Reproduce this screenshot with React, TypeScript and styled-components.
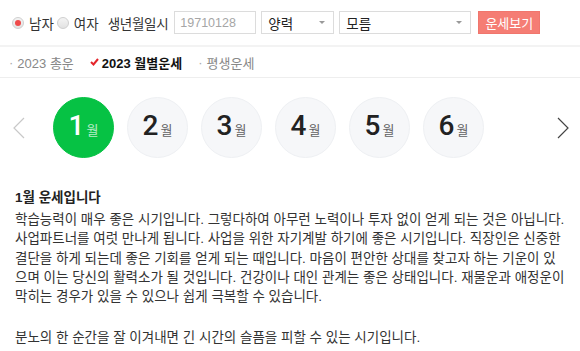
import { useState } from 'react';
import styled, { createGlobalStyle } from 'styled-components';

const GlobalStyle = createGlobalStyle`
  body {
    margin: 0;
    background: #fff;
    font-family: "Liberation Sans", "Noto Sans CJK KR", sans-serif;
    color: #333;
  }
`;

const MONTHS = [1, 2, 3, 4, 5, 6];

const FORTUNE_LINES = [
  '학습능력이 매우 좋은 시기입니다. 그렇다하여 아무런 노력이나 투자 없이 얻게 되는 것은 아닙니다.',
  '사업파트너를 여럿 만나게 됩니다. 사업을 위한 자기계발 하기에 좋은 시기입니다. 직장인은 신중한',
  '결단을 하게 되는데 좋은 기회를 얻게 되는 때입니다. 마음이 편안한 상대를 찾고자 하는 기운이 있',
  '으며 이는 당신의 활력소가 될 것입니다. 건강이나 대인 관계는 좋은 상태입니다. 재물운과 애정운이',
  '막히는 경우가 있을 수 있으나 쉽게 극복할 수 있습니다.',
];

const App = () => {
  const [gender, setGender] = useState<'m' | 'f'>('m');
  const [month, setMonth] = useState(1);

  return (
    <>
      <GlobalStyle />
      <Page>
        <SearchBar>
          <RadioLabel onClick={() => setGender('m')}>
            <Radio checked={gender === 'm'} />
            남자
          </RadioLabel>
          <RadioLabel onClick={() => setGender('f')}>
            <Radio checked={gender === 'f'} />
            여자
          </RadioLabel>
          <FieldLabel>생년월일시</FieldLabel>
          <DateInput placeholder="19710128" />
          <SelectBox width={73}>
            양력
            <Caret />
          </SelectBox>
          <SelectBox width={132}>
            모름
            <Caret />
          </SelectBox>
          <SubmitButton>운세보기</SubmitButton>
        </SearchBar>

        <Tabs>
          <Tab>
            <Dot>·</Dot>2023 총운
          </Tab>
          <Tab active>
            <svg width="9" height="8" viewBox="0 0 9 8">
              <path d="M1 4 L3.5 6.5 L8 1" stroke="#e4252b" strokeWidth="2" fill="none" />
            </svg>
            2023 월별운세
          </Tab>
          <Tab>
            <Dot>·</Dot>평생운세
          </Tab>
        </Tabs>

        <MonthRow>
          <ArrowButton side="left">
            <svg width="12" height="22" viewBox="0 0 12 22">
              <path d="M11 1 L1 11 L11 21" stroke="#c8c8c8" strokeWidth="1.2" fill="none" />
            </svg>
          </ArrowButton>
          <MonthList>
            {MONTHS.map(m => (
              <MonthCircle key={m} active={m === month} onClick={() => setMonth(m)}>
                <MonthNum>{m}</MonthNum>
                <MonthUnit>월</MonthUnit>
              </MonthCircle>
            ))}
          </MonthList>
          <ArrowButton side="right">
            <svg width="12" height="22" viewBox="0 0 12 22">
              <path d="M1 1 L11 11 L1 21" stroke="#444" strokeWidth="1.2" fill="none" />
            </svg>
          </ArrowButton>
        </MonthRow>

        <Article>
          <Title>{month}월 운세입니다</Title>
          <Body>
            {FORTUNE_LINES.map(line => (
              <Line key={line}>{line}</Line>
            ))}
          </Body>
          <Body>
            <Line>분노의 한 순간을 잘 이겨내면 긴 시간의 슬픔을 피할 수 있는 시기입니다.</Line>
          </Body>
        </Article>
      </Page>
    </>
  );
};

export default App;

const Page = styled.div`
  width: 580px;
  overflow: hidden;
`;

const SearchBar = styled.div`
  display: flex;
  align-items: center;
  height: 45px;
  padding-left: 12px;
  border-bottom: 2px solid #f3f3f3;
  font-size: 13.5px;
  color: #333;
`;

const RadioLabel = styled.label`
  display: flex;
  align-items: center;
  gap: 5px;
  margin-right: 3px;
  cursor: pointer;
`;

const Radio = styled.span<{ checked: boolean }>`
  position: relative;
  width: 10px;
  height: 10px;
  border-radius: 50%;
  border: 1px solid #cfcfcf;
  background: linear-gradient(#f4f4f4, #e2e2e2);
  &::after {
    content: '';
    display: ${p => (p.checked ? 'block' : 'none')};
    position: absolute;
    left: 2px;
    top: 2px;
    width: 6px;
    height: 6px;
    border-radius: 50%;
    background: #ef4a4a;
  }
`;

const FieldLabel = styled.span`
  margin-left: 6px;
  margin-right: 6px;
  letter-spacing: -0.3px;
`;

const DateInput = styled.input`
  box-sizing: border-box;
  width: 82px;
  height: 23px;
  border: 1px solid #dcdcdc;
  padding: 0 5px;
  font-family: "Liberation Sans", sans-serif;
  font-size: 12.5px;
  outline: none;
  &::placeholder {
    color: #a6a6a6;
  }
`;

const SelectBox = styled.div<{ width: number }>`
  box-sizing: border-box;
  display: flex;
  align-items: center;
  justify-content: space-between;
  width: ${p => p.width}px;
  height: 23px;
  margin-left: 5px;
  padding: 0 8px 0 6px;
  border: 1px solid #dcdcdc;
  font-size: 13.5px;
  color: #222;
`;

const Caret = styled.span`
  width: 0;
  height: 0;
  border-left: 3px solid transparent;
  border-right: 3px solid transparent;
  border-top: 3px solid #999;
`;

const SubmitButton = styled.button`
  box-sizing: border-box;
  width: 62px;
  height: 23px;
  margin-left: 7px;
  border: 1px solid #f0766d;
  background: #f57d74;
  color: #fff;
  font-family: "Liberation Sans", "Noto Sans CJK KR", sans-serif;
  font-size: 13px;
  padding: 0;
`;

const Tabs = styled.div`
  display: flex;
  align-items: center;
  height: 30px;
  padding-left: 9px;
  border-bottom: 1px solid #eeeeee;
  font-size: 13px;
`;

const Tab = styled.span<{ active?: boolean }>`
  display: flex;
  align-items: center;
  gap: 3px;
  margin-right: 16px;
  color: ${p => (p.active ? '#111' : '#888')};
  font-weight: ${p => (p.active ? 700 : 400)};
`;

const Dot = styled.span`
  color: #aaa;
  margin-right: 1px;
`;

const MonthRow = styled.div`
  display: flex;
  align-items: center;
  padding: 19px 0 0;
`;

const ArrowButton = styled.span<{ side: 'left' | 'right' }>`
  display: flex;
  align-items: center;
  width: 12px;
  margin: ${p => (p.side === 'left' ? '0 28px 0 13px' : '0 11px 0 auto')};
`;

const MonthList = styled.div`
  display: flex;
  gap: 13px;
`;

const MonthCircle = styled.div<{ active: boolean }>`
  box-sizing: border-box;
  display: flex;
  align-items: baseline;
  justify-content: center;
  width: 61px;
  height: 61px;
  padding-top: 13px;
  border-radius: 50%;
  border: 1px solid ${p => (p.active ? '#06c244' : '#eef0f3')};
  background: ${p => (p.active ? '#06c244' : '#f6f7f9')};
  color: ${p => (p.active ? '#fff' : '#222')};
  cursor: pointer;
`;

const MonthNum = styled.span`
  font-family: Roboto, "Liberation Sans", sans-serif;
  font-size: 28px;
  font-weight: 500;
  line-height: 30px;
`;

const MonthUnit = styled.span`
  margin-left: 2px;
  font-family: "Noto Sans CJK KR", sans-serif;
  font-size: 13px;
  opacity: 0.7;
`;

const Article = styled.div`
  padding: 30px 15px 0;
`;

const Title = styled.div`
  font-size: 13.5px;
  font-weight: 700;
  color: #222;
  line-height: 20px;
  margin-bottom: 2px;
`;

const Body = styled.p`
  margin: 0 0 22px;
  font-size: 13.5px;
  line-height: 19.3px;
  color: #333;
  &:last-child {
    margin-bottom: 0;
  }
`;

const Line = styled.span`
  display: block;
  white-space: nowrap;
`;
